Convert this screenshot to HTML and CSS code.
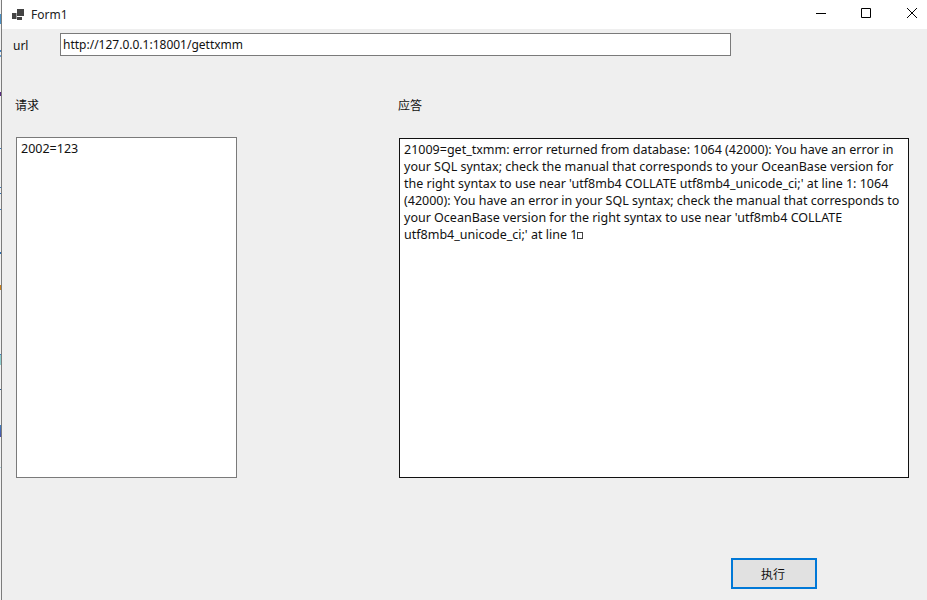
FILE: index.html
```html
<!DOCTYPE html>
<html lang="zh-CN">
<head>
  <meta charset="UTF-8">
  <title>Form1</title>
  <link rel="stylesheet" href="styles.css">
</head>
<body>
  <div class="window">
    <div class="titlebar">
      <div class="title">
        <svg class="app-icon" width="12" height="11" viewBox="0 0 12 11">
          <path d="M0 4h4.5v6H0zM5 0h7v7H5zM5 8h5v3H5z" fill="#444"/>
        </svg>
        <span>Form1</span>
      </div>
      <div class="controls">
        <svg class="ctl" width="46" height="29" viewBox="0 0 46 29"><path d="M27 13.5h10" stroke="#000" fill="none"/></svg>
        <svg class="ctl" width="46" height="29" viewBox="0 0 46 29"><path d="M26.5 8.5h9v9h-9z" stroke="#000" fill="none"/></svg>
        <svg class="ctl" width="46" height="29" viewBox="0 0 46 29"><path d="M26 8l10 10M36 8L26 18" stroke="#000" fill="none"/></svg>
      </div>
    </div>
    <div class="content">
      <div class="url-row">
        <label class="url-label">url</label>
        <div class="field url-field">http://127.0.0.1:18001/gettxmm</div>
      </div>
      <div class="panes">
        <div class="pane pane-req">
          <div class="pane-label">请求</div>
          <div class="field box box-req">2002=123</div>
        </div>
        <div class="pane pane-resp">
          <div class="pane-label">应答</div>
          <div class="field box box-resp">21009=get_txmm: error returned from database: 1064 (42000): You have an error in<br>your SQL syntax; check the manual that corresponds to your OceanBase version for<br>the right syntax to use near 'utf8mb4 COLLATE utf8mb4_unicode_ci;' at line 1: 1064<br>(42000): You have an error in your SQL syntax; check the manual that corresponds to<br>your OceanBase version for the right syntax to use near 'utf8mb4 COLLATE<br>utf8mb4_unicode_ci;' at line 1<span class="tofu"></span></div>
        </div>
      </div>
      <div class="actions">
        <button class="run-btn">执行</button>
      </div>
    </div>
  </div>
</body>
</html>
```
FILE: styles.css
```css
* {
  box-sizing: border-box;
}
html, body {
  height: 100%;
}
body {
  margin: 0;
  padding-left: 1px;
  /* bits of the desktop showing past the window edge */
  background: linear-gradient(to bottom,
    #f2f2f2 14px, #4a90c4 14px, #4a90c4 24px, #f2f2f2 24px,
    #f2f2f2 50px, #3f7fc0 50px, #3f7fc0 52px, #f2f2f2 52px,
    #f2f2f2 55px, #6aa0d0 55px, #6aa0d0 57px, #f2f2f2 57px,
    #f2f2f2 92px, #5a2a80 92px, #5a2a80 96px, #f2f2f2 96px,
    #f2f2f2 148px, #3f7fc0 148px, #3f7fc0 149px, #f2f2f2 149px,
    #f2f2f2 187px, #3f7fc0 187px, #3f7fc0 188px, #f2f2f2 188px,
    #f2f2f2 193px, #2f6fb0 193px, #2f6fb0 194px, #f2f2f2 194px,
    #f2f2f2 209px, #3f7fc0 209px, #3f7fc0 210px, #f2f2f2 210px,
    #f2f2f2 252px, #2f6fb0 252px, #2f6fb0 254px, #f2f2f2 254px,
    #f2f2f2 285px, #c8801f 285px, #c8801f 290px, #f2f2f2 290px,
    #f2f2f2 354px, #3f7fc0 354px, #3f7fc0 355px, #8fd0d0 355px, #8fd0d0 365px, #f2f2f2 365px,
    #f2f2f2 389px, #2f5f90 389px, #2f5f90 390px, #f2f2f2 390px,
    #f2f2f2 425px, #3f7fc0 425px, #4a50a8 437px, #f2f2f2 437px,
    #f2f2f2 467px, #a8d0e0 467px, #a8d0e0 468px, #f2f2f2 468px);
  font-family: "Noto Sans", "Noto Sans CJK SC", sans-serif;
  font-size: 12px;
  color: #111;
  overflow: hidden;
}
.window {
  height: 600px;
  border-left: 1px solid #7c7c7c;
  display: flex;
  flex-direction: column;
}
.titlebar {
  height: 29px;
  background: #fff;
  display: flex;
  justify-content: space-between;
}
.title {
  display: flex;
  align-items: center;
  gap: 7px;
  padding-left: 10px;
  padding-bottom: 1px;
  color: #222;
}
.controls {
  display: flex;
}
.ctl {
  display: block;
}
.content {
  flex: 1;
  background: #efefef;
  padding: 4px 18px 11px 14px;
  display: flex;
  flex-direction: column;
}
.field {
  background: #fff;
  white-space: nowrap;
}
.url-row {
  display: flex;
  align-items: center;
  padding-right: 178px;
}
.url-label {
  width: 46px;
  margin-left: -3px;
  margin-right: 1px;
  padding-top: 1px;
}
.url-field {
  flex: 1;
  height: 23px;
  line-height: 21px;
  border: 1px solid #7a7a7a;
  padding-left: 2px;
}
.panes {
  margin-top: 40px;
  display: flex;
}
.pane-req {
  width: 383px;
}
.pane-label {
  height: 20px;
  line-height: 20px;
  margin-left: -1px;
}
.box {
  height: 341px;
  border: 1px solid #7a7a7a;
  padding: 2px 4px;
  line-height: 17px;
  font-size: 12.5px;
}
.box-req {
  width: 221px;
  margin-top: 21px;
}
.box-resp {
  width: 510px;
  height: 340px;
  margin-top: 22px;
  border-color: #111;
}
.tofu {
  display: inline-block;
  width: 6px;
  height: 7px;
  border: 1px solid #444;
}
.actions {
  margin-top: auto;
  padding-left: 715px;
}
.run-btn {
  display: block;
  width: 86px;
  height: 31px;
  background: #e1e1e1;
  border: 2px solid #0078d7;
  font: inherit;
  color: #111;
  padding: 0 2px 0 0;
}
```
